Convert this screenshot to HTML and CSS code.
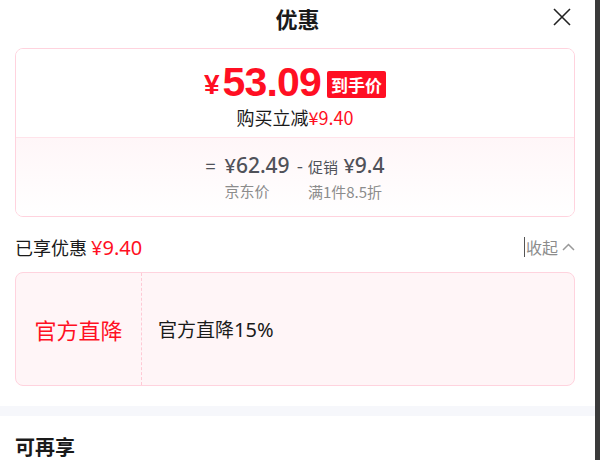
FILE: index.html
```html
<!DOCTYPE html>
<html lang="zh">
<head>
<meta charset="utf-8">
<link rel="stylesheet" href="styles.css">
</head>
<body>
<div class="screen">
  <div class="page">
    <header class="header">
      <h1 class="title">优惠</h1>
      <span class="close">
        <svg width="18" height="18" viewBox="0 0 18 18"><path d="M1 1L17 17M17 1L1 17" stroke="#222" stroke-width="1.6" fill="none"/></svg>
      </span>
    </header>

    <section class="card price-card">
      <div class="price-top">
        <div class="price-line">
          <span class="yen">¥</span><span class="amount">53.09</span><span class="badge">到手价</span>
        </div>
        <div class="reduce">购买立减<span class="red">¥9.40</span></div>
      </div>
      <div class="price-bottom">
        <span class="op">=</span>
        <div class="col">
          <div class="val"><span class="y">¥</span>62.49</div>
          <div class="lbl">京东价</div>
        </div>
        <span class="op minus">-</span>
        <div class="col">
          <div class="val"><span class="tag">促销</span> <span class="y">¥</span>9.4</div>
          <div class="lbl">满1件8.5折</div>
        </div>
      </div>
    </section>

    <div class="enjoy">
      <div class="enjoy-left">已享优惠 <span class="red">¥9.40</span></div>
      <div class="fold"><span class="caret"></span>收起
        <svg width="13" height="8" viewBox="0 0 13 8"><path d="M1 7L6.5 1.5L12 7" stroke="#999" stroke-width="1.5" fill="none"/></svg>
      </div>
    </div>

    <section class="card coupon">
      <div class="coupon-name">官方直降</div>
      <div class="coupon-desc">官方直降<span class="num">15%</span></div>
    </section>

    <div class="band"></div>

    <h2 class="more">可再享</h2>
  </div>
  <div class="scrollbar"></div>
</div>
</body>
</html>
```

FILE: styles.css
```css
* { box-sizing: border-box; }
html, body { margin: 0; padding: 0; }
body {
  width: 600px;
  height: 460px;
  overflow: hidden;
  background: #fff;
  font-family: "Noto Sans CJK SC", "Noto Sans", sans-serif;
  color: #1a1a1a;
}
.screen { display: flex; height: 460px; }
.page { flex: 1; min-width: 0; }
.scrollbar { width: 5px; background: #3b3b3b; }

.header {
  position: relative;
  height: 36px;
  display: flex;
  align-items: center;
  justify-content: center;
}
.title {
  margin: 0;
  font-size: 22px;
  font-weight: 700;
  line-height: 36px;
  color: #1a1a1a;
}
.close {
  position: absolute;
  right: 24px;
  top: 8px;
  width: 18px;
  height: 18px;
  display: flex;
}

.card {
  margin: 12px 20px 0 15px;
  border: 1px solid #ffd3de;
  border-radius: 8px;
  overflow: hidden;
}
.price-top {
  height: 89px;
  display: flex;
  flex-direction: column;
  align-items: center;
  padding-top: 13px;
  background: #fff;
  border-bottom: 1px solid #ffe3ea;
}
.price-line {
  display: flex;
  align-items: center;
  height: 40px;
  color: #ff0f23;
  font-family: "Liberation Sans", Arial, sans-serif;
  font-weight: 700;
}
.yen { font-size: 28px; margin-right: 3px; margin-top: 6px; }
.amount { font-size: 41px; letter-spacing: -0.8px; line-height: 40px; }
.badge {
  margin-left: 6px;
  margin-top: 4px;
  background: #ff0f23;
  color: #fff;
  font-family: "Noto Sans CJK SC", sans-serif;
  font-size: 17px;
  font-weight: 700;
  line-height: 27px;
  padding: 0 4px;
  border-radius: 2px;
}
.reduce {
  margin-top: 4px;
  font-size: 18px;
  line-height: 22px;
  color: #1a1a1a;
}
.red { color: #ff0f23; }

.price-bottom {
  height: 78px;
  display: flex;
  justify-content: center;
  align-items: flex-start;
  gap: 9px;
  padding-top: 13px;
  padding-left: 0;
  background: linear-gradient(#fff6f8, #ffffff);
  color: #505259;
}
.op { font-size: 18px; line-height: 28px; color: #505259; }
.op.minus { margin-left: -2px; margin-right: -4px; }
.col { display: flex; flex-direction: column; }
.val {
  font-family: "Noto Sans", sans-serif;
  font-size: 21px;
  line-height: 28px;
  font-weight: 500;
}
.val .y { font-size: 20px; }
.tag { font-family: "Noto Sans CJK SC", sans-serif; font-size: 15px; font-weight: 400; }
.lbl { font-size: 15px; line-height: 20px; margin-top: 1px; color: #8c8c8c; }

.enjoy {
  margin: 17px 20px 0 15px;
  height: 26px;
  display: flex;
  justify-content: space-between;
  align-items: center;
}
.enjoy-left { font-size: 18px; }
.enjoy-left .red { font-family: "Noto Sans", sans-serif; font-size: 20px; }
.fold {
  display: flex;
  align-items: center;
  gap: 4px;
  font-size: 16px;
  color: #8c8c8c;
}
.caret { width: 1px; height: 20px; background: #555; margin-right: -3px; }

.coupon {
  margin-top: 12px;
  height: 114px;
  display: flex;
  align-items: center;
  background: #fff5f7;
}
.coupon-name {
  width: 126px;
  height: 100%;
  display: flex;
  align-items: center;
  justify-content: center;
  border-right: 1px dashed #ffc9d5;
  color: #ff0f23;
  font-size: 22px;
}
.coupon-desc {
  padding-left: 16px;
  font-size: 19px;
  color: #1a1a1a;
}
.coupon-desc .num { font-family: "Noto Sans", sans-serif; font-size: 20px; }

.band { margin-top: 20px; height: 10px; background: #f6f7fb; }
.more {
  margin: 17px 0 0 15px;
  font-size: 20px;
  font-weight: 700;
  line-height: 28px;
  color: #1a1a1a;
}
```
